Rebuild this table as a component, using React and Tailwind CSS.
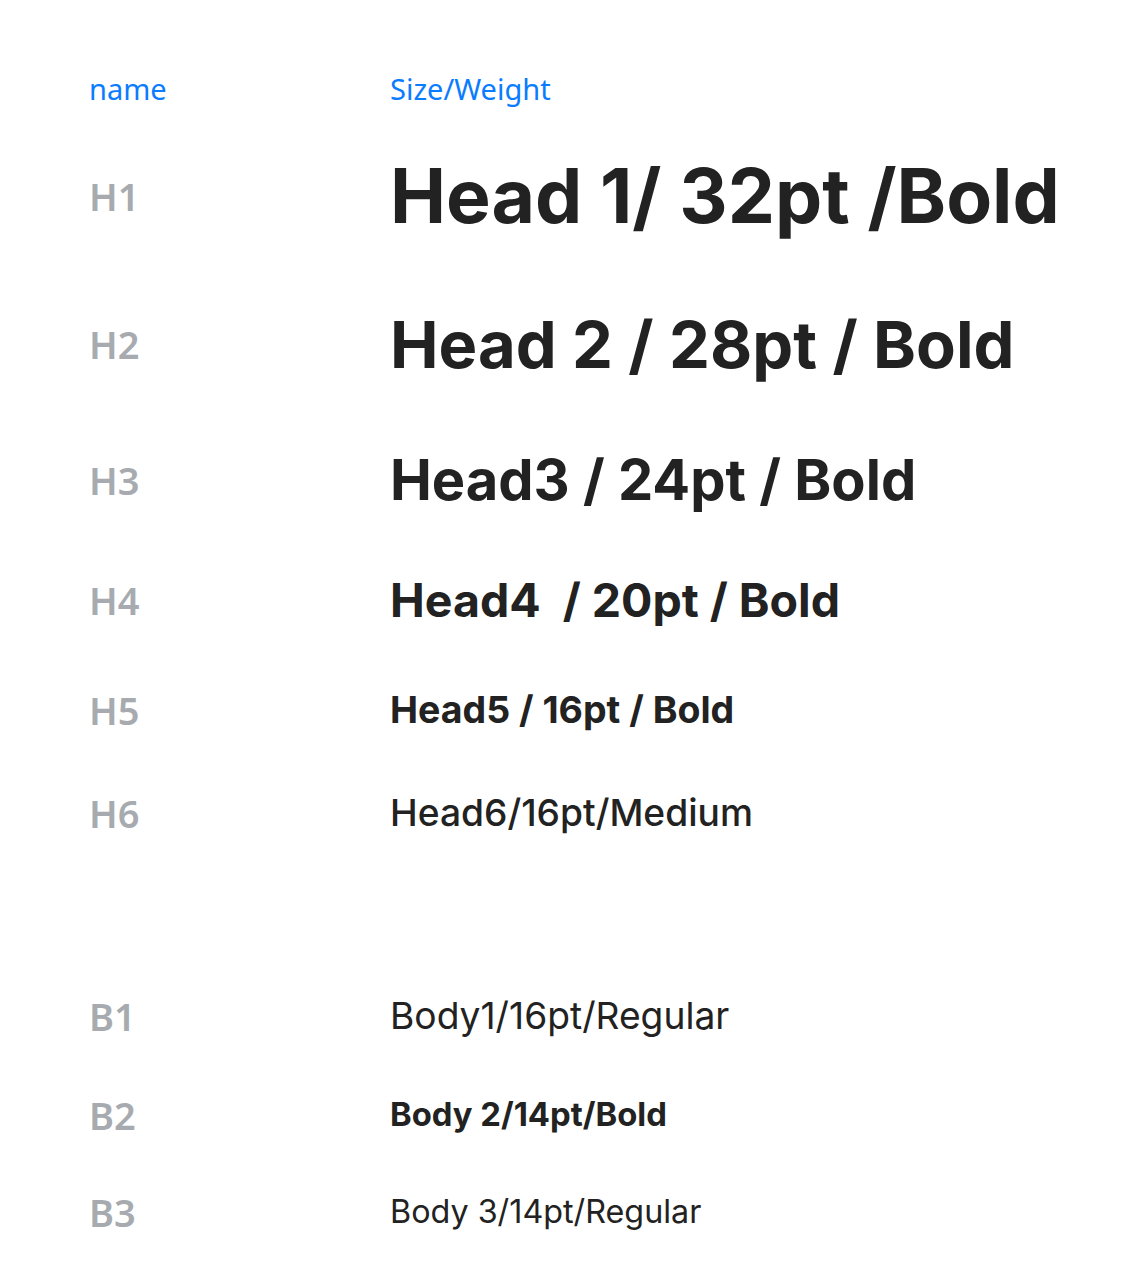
export default function App() {
  const label = "font-['Noto_Sans',sans-serif] font-semibold text-[38px] leading-none text-[#a7abb0]";
  const main = "font-['Inter',sans-serif] text-[#222222] leading-none whitespace-nowrap";
  const Row = ({ h, name, children }) => (
    <div className={`flex items-center ${h}`}>
      <div className={`w-[390px] shrink-0 pl-[89px] ${label}`}>{name}</div>
      <div>{children}</div>
    </div>
  );
  return (
    <div className="w-[1132px] h-[1282px] bg-white pt-[58px] overflow-hidden">
      <div className="flex items-center h-[60px] font-['Noto_Sans',sans-serif] text-[29px] leading-none text-[#0a7cff]">
        <div className="w-[390px] shrink-0 pl-[89px]">name</div>
        <div>Size/Weight</div>
      </div>
      <Row h="h-[155px]" name="H1">
        <span className={`${main} text-[75px] font-bold`}>Head 1/ 32pt /Bold</span>
      </Row>
      <Row h="h-[142px]" name="H2">
        <span className={`${main} text-[65px] font-bold`}>Head 2 / 28pt / Bold</span>
      </Row>
      <Row h="h-[130px]" name="H3">
        <span className={`${main} text-[56px] font-bold`}>Head3 / 24pt / Bold</span>
      </Row>
      <Row h="h-[110px]" name="H4">
        <span className={`${main} text-[46.5px] font-bold`}>Head4&nbsp; / 20pt / Bold</span>
      </Row>
      <Row h="h-[110px]" name="H5">
        <span className={`${main} text-[37.5px] font-bold`}>Head5 / 16pt / Bold</span>
      </Row>
      <Row h="h-[96px]" name="H6">
        <span className={`${main} text-[37.2px] font-medium`}>Head6/16pt/Medium</span>
      </Row>
      <div className="h-[107px]" />
      <Row h="h-[96px]" name="B1">
        <span className={`${main} text-[37.2px] font-normal`}>Body1/16pt/Regular</span>
      </Row>
      <Row h="h-[102px]" name="B2">
        <span className={`${main} text-[32.8px] font-bold`}>Body 2/14pt/Bold</span>
      </Row>
      <Row h="h-[92px]" name="B3">
        <span className={`${main} text-[32.3px] font-normal`}>Body 3/14pt/Regular</span>
      </Row>
    </div>
  );
}
